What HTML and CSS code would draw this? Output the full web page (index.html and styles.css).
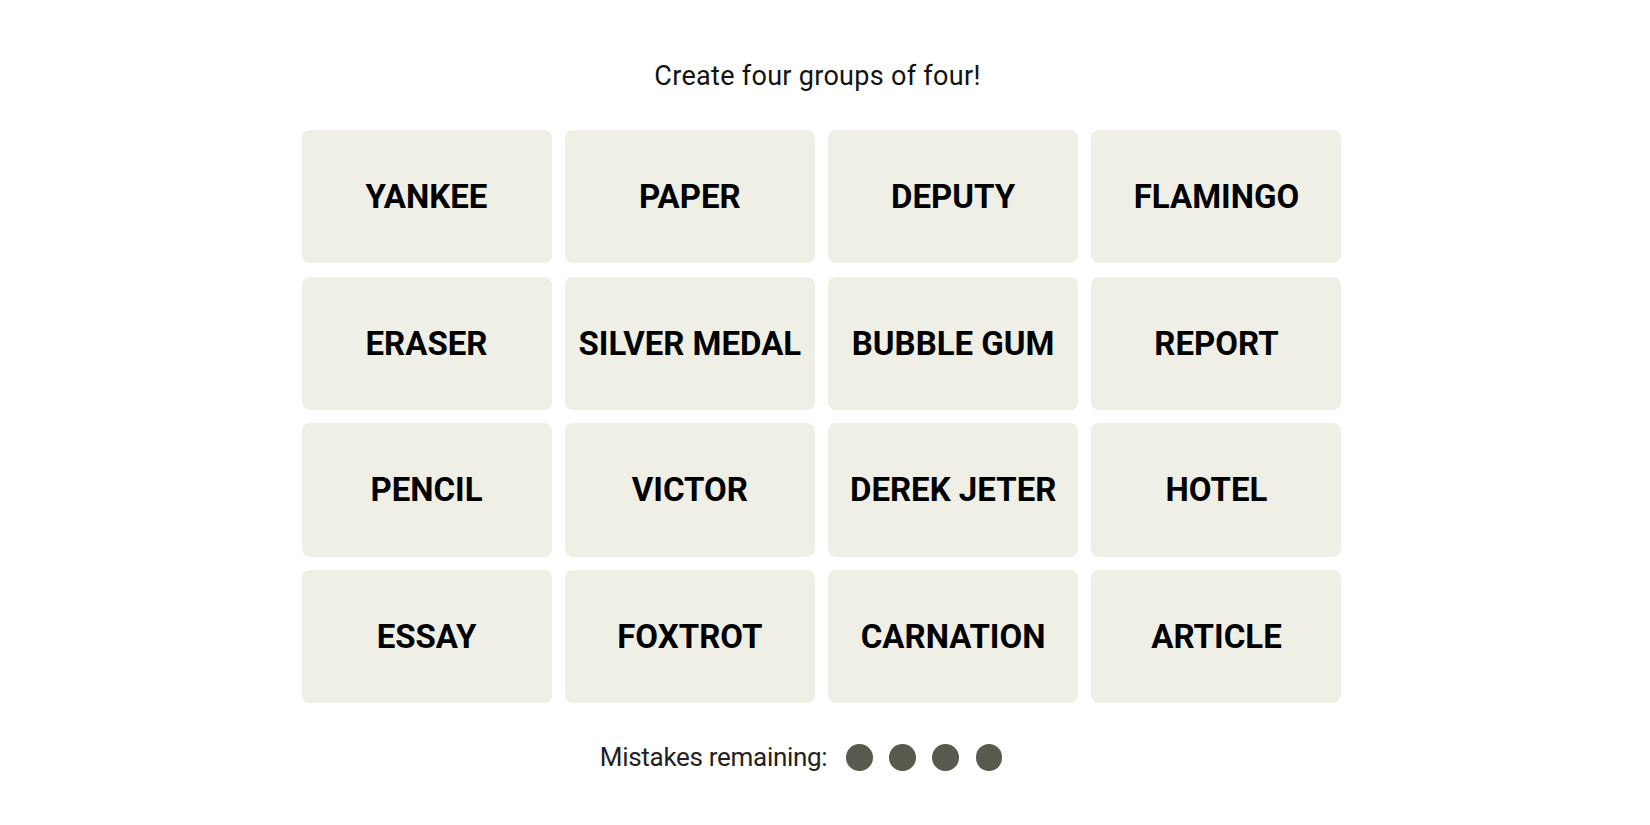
FILE: index.html
```html
<!DOCTYPE html>
<html lang="en">
<head>
<meta charset="utf-8">
<title>Connections</title>
<link rel="stylesheet" href="styles.css">
</head>
<body>
<main class="page">
  <p class="prompt">Create four groups of four!</p>
  <section class="board">
    <div class="tile">YANKEE</div>
    <div class="tile">PAPER</div>
    <div class="tile">DEPUTY</div>
    <div class="tile">FLAMINGO</div>
    <div class="tile">ERASER</div>
    <div class="tile">SILVER MEDAL</div>
    <div class="tile">BUBBLE GUM</div>
    <div class="tile">REPORT</div>
    <div class="tile">PENCIL</div>
    <div class="tile">VICTOR</div>
    <div class="tile">DEREK JETER</div>
    <div class="tile">HOTEL</div>
    <div class="tile">ESSAY</div>
    <div class="tile">FOXTROT</div>
    <div class="tile">CARNATION</div>
    <div class="tile">ARTICLE</div>
  </section>
  <div class="mistakes">
    <span class="mistakes-label">Mistakes remaining:</span>
    <span class="dots">
      <span class="dot"></span>
      <span class="dot"></span>
      <span class="dot"></span>
      <span class="dot"></span>
    </span>
  </div>
</main>
</body>
</html>
```
FILE: styles.css
```css
* { box-sizing: border-box; }
html, body { margin: 0; padding: 0; background: #ffffff; }
body {
  font-family: Roboto, "Liberation Sans", Arial, sans-serif;
  color: #121212;
}
.page {
  display: flex;
  flex-direction: column;
  align-items: center;
  padding-right: 7px;
  padding-top: 60px;
}
.prompt {
  margin: 0 8px 0 0;
  font-size: 27px;
  letter-spacing: 0.3px;
  line-height: 33px;
  font-weight: 400;
  color: #121212;
}
.board {
  margin-top: 37px;
  display: grid;
  grid-template-columns: repeat(4, 250px);
  grid-auto-rows: 133.33px;
  gap: 13.33px;
}
.tile {
  background: #efefe6;
  border-radius: 8px;
  display: flex;
  align-items: center;
  justify-content: center;
  font-weight: 700;
  font-size: 33px;
  color: #000;
  text-transform: uppercase;
  white-space: nowrap;
}
.mistakes {
  margin-top: 40.7px;
  height: 26.67px;
  display: flex;
  align-items: center;
  padding-right: 41px;
}
.mistakes-label {
  font-size: 26px;
  letter-spacing: -0.3px;
  color: #222;
  margin-right: 19px;
}
.dots {
  display: flex;
  gap: 16.4px;
}
.dot {
  width: 26.67px;
  height: 26.67px;
  border-radius: 50%;
  background: #5a594e;
}
```
